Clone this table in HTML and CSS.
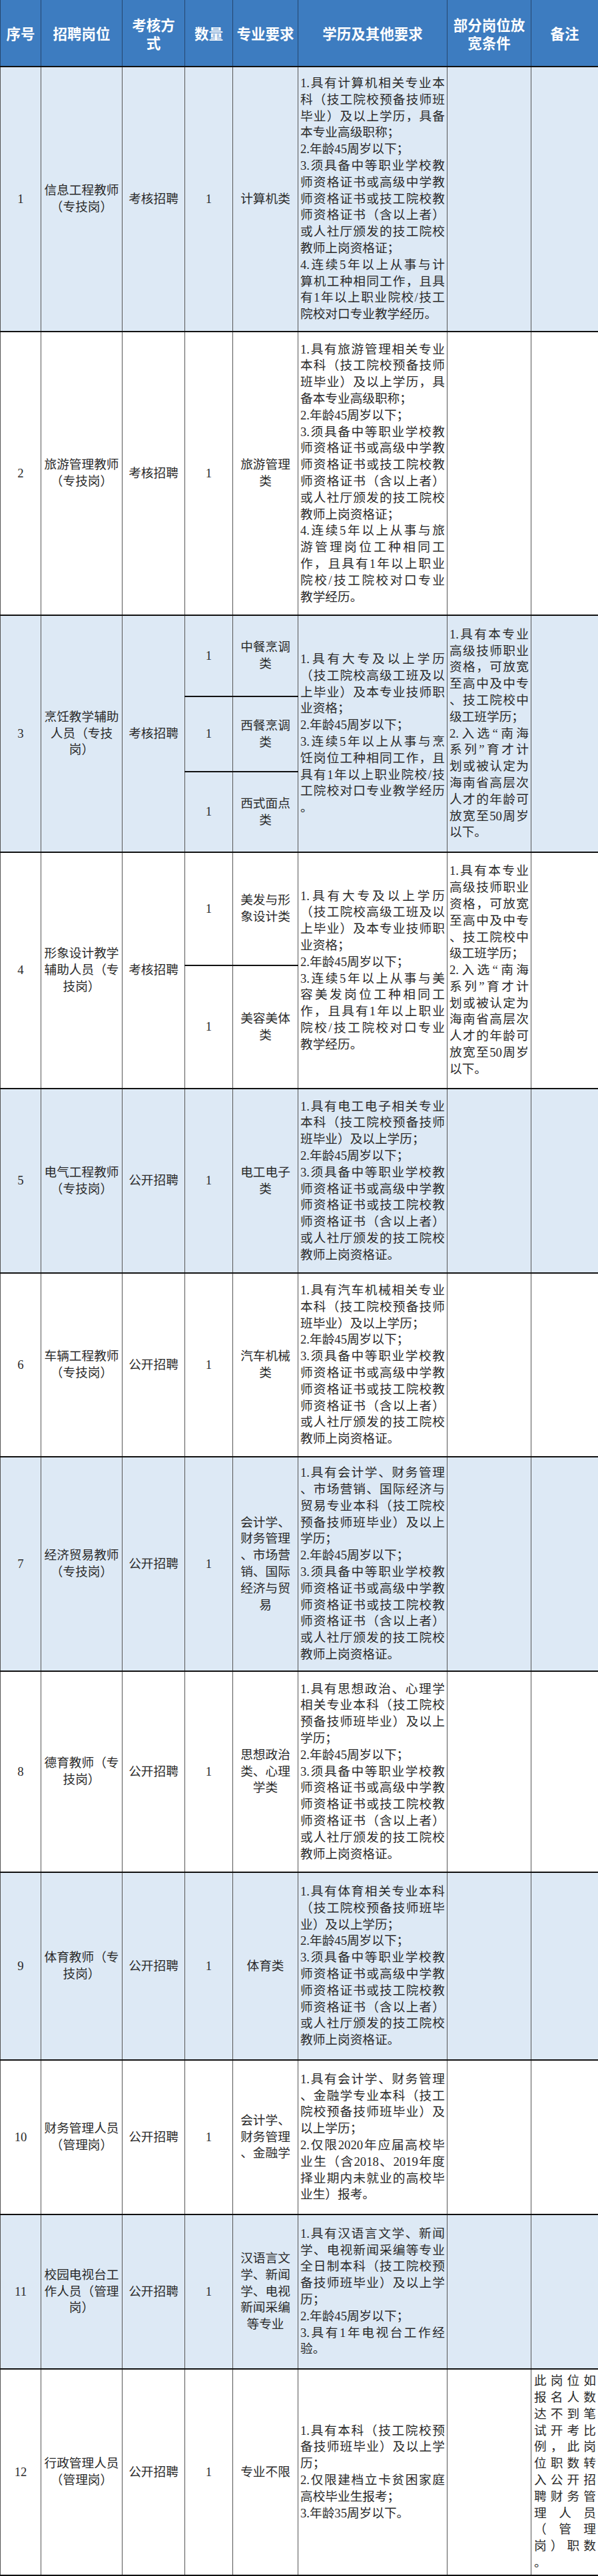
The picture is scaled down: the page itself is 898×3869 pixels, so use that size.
FILE: index.html
```html
<!DOCTYPE html>
<html lang="zh-CN">
<head>
<meta charset="utf-8">
<title>招聘岗位表</title>
<link rel="stylesheet" href="styles.css">
</head>
<body>
<table class="jobs">
  <colgroup>
    <col class="w-no"><col class="w-post"><col class="w-way"><col class="w-num"><col class="w-major"><col class="w-req"><col class="w-relax"><col class="w-note">
  </colgroup>
  <thead>
    <tr class="head">
      <th>序号</th>
      <th>招聘岗位</th>
      <th>考核方<br>式</th>
      <th>数量</th>
      <th>专业要求</th>
      <th>学历及其他要求</th>
      <th>部分岗位放<br>宽条件</th>
      <th>备注</th>
    </tr>
  </thead>
  <tbody>
    <tr class="r1 odd">
      <td class="c">1</td>
      <td class="c">信息工程教师<br>（专技岗）</td>
      <td class="c">考核招聘</td>
      <td class="c">1</td>
      <td class="c">计算机类</td>
      <td class="req">
        <p><span>1.具有计算机相关专业本</span><span>科（技工院校预备技师班</span><span>毕业）及以上学历，具备</span><span>本专业高级职称；</span></p>
        <p><span>2.年龄45周岁以下；</span></p>
        <p><span>3.须具备中等职业学校教</span><span>师资格证书或高级中学教</span><span>师资格证书或技工院校教</span><span>师资格证书（含以上者）</span><span>或人社厅颁发的技工院校</span><span>教师上岗资格证；</span></p>
        <p><span>4.连续5年以上从事与计</span><span>算机工种相同工作，且具</span><span>有1年以上职业院校/技工</span><span>院校对口专业教学经历。</span></p>
      </td>
      <td></td>
      <td></td>
    </tr>

    <tr class="r2">
      <td class="c">2</td>
      <td class="c">旅游管理教师<br>（专技岗）</td>
      <td class="c">考核招聘</td>
      <td class="c">1</td>
      <td class="c">旅游管理<br>类</td>
      <td class="req">
        <p><span>1.具有旅游管理相关专业</span><span>本科（技工院校预备技师</span><span>班毕业）及以上学历，具</span><span>备本专业高级职称；</span></p>
        <p><span>2.年龄45周岁以下；</span></p>
        <p><span>3.须具备中等职业学校教</span><span>师资格证书或高级中学教</span><span>师资格证书或技工院校教</span><span>师资格证书（含以上者）</span><span>或人社厅颁发的技工院校</span><span>教师上岗资格证；</span></p>
        <p><span>4.连续5年以上从事与旅</span><span>游管理岗位工种相同工</span><span>作，且具有1年以上职业</span><span>院校/技工院校对口专业</span><span>教学经历。</span></p>
      </td>
      <td></td>
      <td></td>
    </tr>

    <tr class="r3a odd">
      <td class="c" rowspan="3">3</td>
      <td class="c" rowspan="3">烹饪教学辅助<br>人员（专技<br>岗）</td>
      <td class="c" rowspan="3">考核招聘</td>
      <td class="c">1</td>
      <td class="c">中餐烹调<br>类</td>
      <td class="req" rowspan="3">
        <p><span>1.具有大专及以上学历</span><span>（技工院校高级工班及以</span><span>上毕业）及本专业技师职</span><span>业资格；</span></p>
        <p><span>2.年龄45周岁以下；</span></p>
        <p><span>3.连续5年以上从事与烹</span><span>饪岗位工种相同工作，且</span><span>具有1年以上职业院校/技</span><span>工院校对口专业教学经历</span><span>。</span></p>
      </td>
      <td class="req" rowspan="3">
        <p><span>1.具有本专业</span><span>高级技师职业</span><span>资格，可放宽</span><span>至高中及中专</span><span>、技工院校中</span><span>级工班学历；</span></p>
        <p><span>2.入选“南海</span><span>系列”育才计</span><span>划或被认定为</span><span>海南省高层次</span><span>人才的年龄可</span><span>放宽至50周岁</span><span>以下。</span></p>
      </td>
      <td rowspan="3"></td>
    </tr>
    <tr class="r3b odd">
      <td class="c">1</td>
      <td class="c">西餐烹调<br>类</td>
    </tr>
    <tr class="r3c odd">
      <td class="c">1</td>
      <td class="c">西式面点<br>类</td>
    </tr>

    <tr class="r4a">
      <td class="c" rowspan="2">4</td>
      <td class="c" rowspan="2">形象设计教学<br>辅助人员（专<br>技岗）</td>
      <td class="c" rowspan="2">考核招聘</td>
      <td class="c">1</td>
      <td class="c">美发与形<br>象设计类</td>
      <td class="req" rowspan="2">
        <p><span>1.具有大专及以上学历</span><span>（技工院校高级工班及以</span><span>上毕业）及本专业技师职</span><span>业资格；</span></p>
        <p><span>2.年龄45周岁以下；</span></p>
        <p><span>3.连续5年以上从事与美</span><span>容美发岗位工种相同工</span><span>作，且具有1年以上职业</span><span>院校/技工院校对口专业</span><span>教学经历。</span></p>
      </td>
      <td class="req" rowspan="2">
        <p><span>1.具有本专业</span><span>高级技师职业</span><span>资格，可放宽</span><span>至高中及中专</span><span>、技工院校中</span><span>级工班学历；</span></p>
        <p><span>2.入选“南海</span><span>系列”育才计</span><span>划或被认定为</span><span>海南省高层次</span><span>人才的年龄可</span><span>放宽至50周岁</span><span>以下。</span></p>
      </td>
      <td rowspan="2"></td>
    </tr>
    <tr class="r4b">
      <td class="c">1</td>
      <td class="c">美容美体<br>类</td>
    </tr>

    <tr class="r5 odd">
      <td class="c">5</td>
      <td class="c">电气工程教师<br>（专技岗）</td>
      <td class="c">公开招聘</td>
      <td class="c">1</td>
      <td class="c">电工电子<br>类</td>
      <td class="req">
        <p><span>1.具有电工电子相关专业</span><span>本科（技工院校预备技师</span><span>班毕业）及以上学历；</span></p>
        <p><span>2.年龄45周岁以下；</span></p>
        <p><span>3.须具备中等职业学校教</span><span>师资格证书或高级中学教</span><span>师资格证书或技工院校教</span><span>师资格证书（含以上者）</span><span>或人社厅颁发的技工院校</span><span>教师上岗资格证。</span></p>
      </td>
      <td></td>
      <td></td>
    </tr>

    <tr class="r6">
      <td class="c">6</td>
      <td class="c">车辆工程教师<br>（专技岗）</td>
      <td class="c">公开招聘</td>
      <td class="c">1</td>
      <td class="c">汽车机械<br>类</td>
      <td class="req">
        <p><span>1.具有汽车机械相关专业</span><span>本科（技工院校预备技师</span><span>班毕业）及以上学历；</span></p>
        <p><span>2.年龄45周岁以下；</span></p>
        <p><span>3.须具备中等职业学校教</span><span>师资格证书或高级中学教</span><span>师资格证书或技工院校教</span><span>师资格证书（含以上者）</span><span>或人社厅颁发的技工院校</span><span>教师上岗资格证。</span></p>
      </td>
      <td></td>
      <td></td>
    </tr>

    <tr class="r7 odd">
      <td class="c">7</td>
      <td class="c">经济贸易教师<br>（专技岗）</td>
      <td class="c">公开招聘</td>
      <td class="c">1</td>
      <td class="c">会计学、<br>财务管理<br>、市场营<br>销、国际<br>经济与贸<br>易</td>
      <td class="req">
        <p><span>1.具有会计学、财务管理</span><span>、市场营销、国际经济与</span><span>贸易专业本科（技工院校</span><span>预备技师班毕业）及以上</span><span>学历；</span></p>
        <p><span>2.年龄45周岁以下；</span></p>
        <p><span>3.须具备中等职业学校教</span><span>师资格证书或高级中学教</span><span>师资格证书或技工院校教</span><span>师资格证书（含以上者）</span><span>或人社厅颁发的技工院校</span><span>教师上岗资格证。</span></p>
      </td>
      <td></td>
      <td></td>
    </tr>

    <tr class="r8">
      <td class="c">8</td>
      <td class="c">德育教师（专<br>技岗）</td>
      <td class="c">公开招聘</td>
      <td class="c">1</td>
      <td class="c">思想政治<br>类、心理<br>学类</td>
      <td class="req">
        <p><span>1.具有思想政治、心理学</span><span>相关专业本科（技工院校</span><span>预备技师班毕业）及以上</span><span>学历；</span></p>
        <p><span>2.年龄45周岁以下；</span></p>
        <p><span>3.须具备中等职业学校教</span><span>师资格证书或高级中学教</span><span>师资格证书或技工院校教</span><span>师资格证书（含以上者）</span><span>或人社厅颁发的技工院校</span><span>教师上岗资格证。</span></p>
      </td>
      <td></td>
      <td></td>
    </tr>

    <tr class="r9 odd">
      <td class="c">9</td>
      <td class="c">体育教师（专<br>技岗）</td>
      <td class="c">公开招聘</td>
      <td class="c">1</td>
      <td class="c">体育类</td>
      <td class="req">
        <p><span>1.具有体育相关专业本科</span><span>（技工院校预备技师班毕</span><span>业）及以上学历；</span></p>
        <p><span>2.年龄45周岁以下；</span></p>
        <p><span>3.须具备中等职业学校教</span><span>师资格证书或高级中学教</span><span>师资格证书或技工院校教</span><span>师资格证书（含以上者）</span><span>或人社厅颁发的技工院校</span><span>教师上岗资格证。</span></p>
      </td>
      <td></td>
      <td></td>
    </tr>

    <tr class="r10">
      <td class="c">10</td>
      <td class="c">财务管理人员<br>（管理岗）</td>
      <td class="c">公开招聘</td>
      <td class="c">1</td>
      <td class="c">会计学、<br>财务管理<br>、金融学</td>
      <td class="req">
        <p><span>1.具有会计学、财务管理</span><span>、金融学专业本科（技工</span><span>院校预备技师班毕业）及</span><span>以上学历；</span></p>
        <p><span>2.仅限2020年应届高校毕</span><span>业生（含2018、2019年度</span><span>择业期内未就业的高校毕</span><span>业生）报考。</span></p>
      </td>
      <td></td>
      <td></td>
    </tr>

    <tr class="r11 odd">
      <td class="c">11</td>
      <td class="c">校园电视台工<br>作人员（管理<br>岗）</td>
      <td class="c">公开招聘</td>
      <td class="c">1</td>
      <td class="c">汉语言文<br>学、新闻<br>学、电视<br>新闻采编<br>等专业</td>
      <td class="req">
        <p><span>1.具有汉语言文学、新闻</span><span>学、电视新闻采编等专业</span><span>全日制本科（技工院校预</span><span>备技师班毕业）及以上学</span><span>历；</span></p>
        <p><span>2.年龄45周岁以下；</span></p>
        <p><span>3.具有1年电视台工作经</span><span>验。</span></p>
      </td>
      <td></td>
      <td></td>
    </tr>

    <tr class="r12">
      <td class="c">12</td>
      <td class="c">行政管理人员<br>（管理岗）</td>
      <td class="c">公开招聘</td>
      <td class="c">1</td>
      <td class="c">专业不限</td>
      <td class="req">
        <p><span>1.具有本科（技工院校预</span><span>备技师班毕业）及以上学</span><span>历；</span></p>
        <p><span>2.仅限建档立卡贫困家庭</span><span>高校毕业生报考；</span></p>
        <p><span>3.年龄35周岁以下。</span></p>
      </td>
      <td></td>
      <td class="req note">
        <p><span>此岗位如</span><span>报名人数</span><span>达不到笔</span><span>试开考比</span><span>例，此岗</span><span>位职数转</span><span>入公开招</span><span>聘财务管</span><span>理人员</span><span>（管理</span><span>岗）职数</span><span>。</span></p>
      </td>
    </tr>
  </tbody>
</table>
</body>
</html>
```

FILE: styles.css
```css
html, body {
  margin: 0;
  padding: 0;
  background: #ffffff;
}

.jobs {
  width: 898px;
  border-collapse: collapse;
  table-layout: fixed;
  font-family: "Liberation Serif", "Noto Sans CJK SC", serif;
  font-size: 18.67px;
  line-height: 24.8px;
  color: #2a2a2a;
  border-left: 1px solid #333;
  border-right: 1px solid #333;
}

.w-no { width: 61px; }
.w-post { width: 122px; }
.w-way { width: 94px; }
.w-num { width: 72px; }
.w-major { width: 98px; }
.w-req { width: 224px; }
.w-relax { width: 126px; }
.w-note { width: 101px; }

.head {
  height: 100px;
  background: #3d7cc0;
}

.head th {
  font-family: "Noto Sans CJK SC", sans-serif;
  font-weight: 700;
  font-size: 21.5px;
  line-height: 27px;
  color: #ffffff;
  text-align: center;
  vertical-align: middle;
  padding: 0 2px;
  border-left: 1px solid #26466e;
  border-right: 1px solid #26466e;
}

.jobs tbody tr {
  border-top: 2px solid #111;
}

.jobs tbody tr:last-child {
  border-bottom: 2px solid #111;
}

.jobs td {
  vertical-align: middle;
  padding: 0 3px;
  border-left: 1px solid #555;
  border-right: 1px solid #555;
}

.odd {
  background: #dde9f5;
}

.c {
  text-align: center;
}

.req p {
  margin: 0;
}

.req span {
  display: block;
  text-align: justify;
  text-align-last: justify;
}

.req span:last-child {
  text-align-last: left;
}

.jobs td.note {
  padding: 0 3px 0 4px;
}

.r1 { height: 398px; }
.r2 { height: 426px; }
.r3a { height: 122px; }
.r3b { height: 113px; }
.r3c { height: 121px; }
.r4a { height: 170px; }
.r4b { height: 185px; }
.r5 { height: 277px; }
.r6 { height: 276px; }
.r7 { height: 322px; }
.r8 { height: 302px; }
.r9 { height: 282px; }
.r10 { height: 232px; }
.r11 { height: 232px; }
.r12 { height: 310px; }
```
